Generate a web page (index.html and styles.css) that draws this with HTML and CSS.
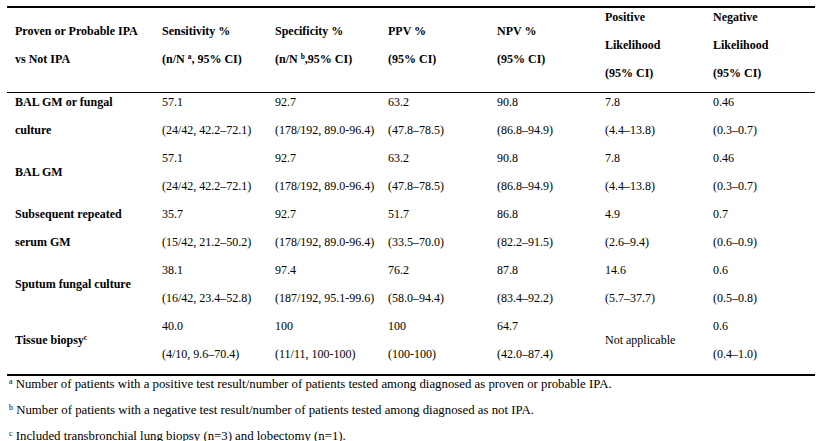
FILE: index.html
```html
<!DOCTYPE html>
<html>
<head>
<meta charset="utf-8">
<link rel="stylesheet" href="styles.css">
</head>
<body>
<div class="page">
<table class="tbl">
  <colgroup>
    <col class="c1"><col class="c2"><col class="c3"><col class="c4"><col class="c5"><col class="c6"><col class="c7">
  </colgroup>
  <thead>
    <tr>
      <th><div class="ln">Proven or Probable IPA</div><div class="ln">vs Not IPA</div></th>
      <th><div class="ln">Sensitivity %</div><div class="ln">(n/N <sup>a</sup>, 95% CI)</div></th>
      <th><div class="ln">Specificity %</div><div class="ln">(n/N <sup>b</sup>,95% CI)</div></th>
      <th><div class="ln">PPV %</div><div class="ln">(95% CI)</div></th>
      <th><div class="ln">NPV %</div><div class="ln">(95% CI)</div></th>
      <th><div class="ln">Positive</div><div class="ln">Likelihood</div><div class="ln">(95% CI)</div></th>
      <th><div class="ln">Negative</div><div class="ln">Likelihood</div><div class="ln">(95% CI)</div></th>
    </tr>
  </thead>
  <tbody>
    <tr>
      <th><div class="ln">BAL GM or fungal</div><div class="ln">culture</div></th>
      <td><div class="ln">57.1</div><div class="ln">(24/42, 42.2–72.1)</div></td>
      <td><div class="ln">92.7</div><div class="ln">(178/192, 89.0-96.4)</div></td>
      <td><div class="ln">63.2</div><div class="ln">(47.8–78.5)</div></td>
      <td><div class="ln">90.8</div><div class="ln">(86.8–94.9)</div></td>
      <td><div class="ln">7.8</div><div class="ln">(4.4–13.8)</div></td>
      <td><div class="ln">0.46</div><div class="ln">(0.3–0.7)</div></td>
    </tr>
    <tr>
      <th><div class="ln">BAL GM</div></th>
      <td><div class="ln">57.1</div><div class="ln">(24/42, 42.2–72.1)</div></td>
      <td><div class="ln">92.7</div><div class="ln">(178/192, 89.0-96.4)</div></td>
      <td><div class="ln">63.2</div><div class="ln">(47.8–78.5)</div></td>
      <td><div class="ln">90.8</div><div class="ln">(86.8–94.9)</div></td>
      <td><div class="ln">7.8</div><div class="ln">(4.4–13.8)</div></td>
      <td><div class="ln">0.46</div><div class="ln">(0.3–0.7)</div></td>
    </tr>
    <tr>
      <th><div class="ln">Subsequent repeated</div><div class="ln">serum GM</div></th>
      <td><div class="ln">35.7</div><div class="ln">(15/42, 21.2–50.2)</div></td>
      <td><div class="ln">92.7</div><div class="ln">(178/192, 89.0-96.4)</div></td>
      <td><div class="ln">51.7</div><div class="ln">(33.5–70.0)</div></td>
      <td><div class="ln">86.8</div><div class="ln">(82.2–91.5)</div></td>
      <td><div class="ln">4.9</div><div class="ln">(2.6–9.4)</div></td>
      <td><div class="ln">0.7</div><div class="ln">(0.6–0.9)</div></td>
    </tr>
    <tr>
      <th><div class="ln">Sputum fungal culture</div></th>
      <td><div class="ln">38.1</div><div class="ln">(16/42, 23.4–52.8)</div></td>
      <td><div class="ln">97.4</div><div class="ln">(187/192, 95.1-99.6)</div></td>
      <td><div class="ln">76.2</div><div class="ln">(58.0–94.4)</div></td>
      <td><div class="ln">87.8</div><div class="ln">(83.4–92.2)</div></td>
      <td><div class="ln">14.6</div><div class="ln">(5.7–37.7)</div></td>
      <td><div class="ln">0.6</div><div class="ln">(0.5–0.8)</div></td>
    </tr>
    <tr class="last">
      <th><div class="ln">Tissue biopsy<sup>c</sup></div></th>
      <td><div class="ln">40.0</div><div class="ln">(4/10, 9.6–70.4)</div></td>
      <td><div class="ln">100</div><div class="ln">(11/11, 100-100)</div></td>
      <td><div class="ln">100</div><div class="ln">(100-100)</div></td>
      <td><div class="ln">64.7</div><div class="ln">(42.0–87.4)</div></td>
      <td><div class="ln">Not applicable</div></td>
      <td><div class="ln">0.6</div><div class="ln">(0.4–1.0)</div></td>
    </tr>
  </tbody>
</table>
<div class="notes">
  <p class="note"><sup>a</sup> Number of patients with a positive test result/number of patients tested among diagnosed as proven or probable IPA.</p>
  <p class="note"><sup>b</sup> Number of patients with a negative test result/number of patients tested among diagnosed as not IPA.</p>
  <p class="note"><sup>c</sup> Included transbronchial lung biopsy (n=3) and lobectomy (n=1).</p>
</div>
</div>
</body>
</html>
```

FILE: styles.css
```css
html, body {
  margin: 0;
  padding: 0;
  background: #fff;
}
body {
  font-family: "Liberation Serif", "Times New Roman", serif;
  font-size: 12px;
  color: #000;
}
.page {
  padding: 6px 0 0 7px;
}
.tbl {
  width: 808px;
  border-collapse: separate;
  border-spacing: 0;
  border-top: 2px solid #000;
  border-bottom: 2px solid #000;
  table-layout: fixed;
}
.c1 { width: 147px; }
.c2 { width: 113px; }
.c3 { width: 113px; }
.c4 { width: 109px; }
.c5 { width: 108px; }
.c6 { width: 108px; }
.c7 { width: 110px; }
.tbl th, .tbl td {
  padding: 0 0 0 8px;
  text-align: left;
  vertical-align: middle;
  white-space: nowrap;
}
.tbl th {
  font-weight: bold;
}
.tbl td {
  font-weight: normal;
}
.tbl thead th {
  border-bottom: 1px solid #000;
}
.tbl .last th, .tbl .last td {
  padding-bottom: 1px;
}
.ln {
  height: 18px;
  line-height: 18px;
  margin-bottom: 10px;
}
sup {
  font-size: 0.62em;
  line-height: 0;
  vertical-align: 0.5em;
}
.notes {
  padding: 2px 0 0 2px;
}
.note {
  margin: 0 0 14px 0;
  height: 12px;
  line-height: 12px;
  font-size: 12.8px;
  white-space: nowrap;
}
```
